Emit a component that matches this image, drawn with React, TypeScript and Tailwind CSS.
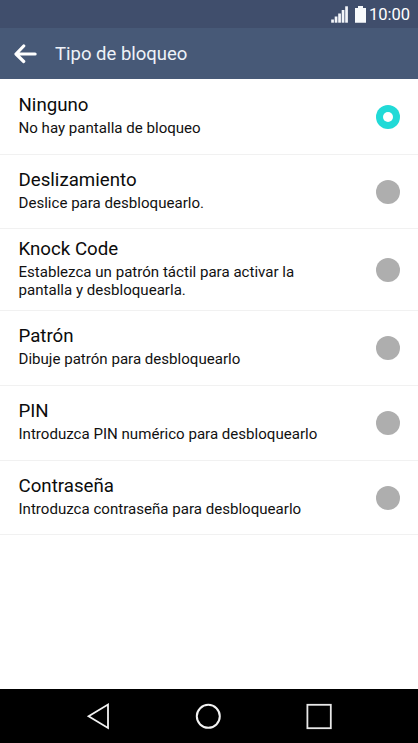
import React, { useState } from 'react';

interface LockOption {
    id: string;
    title: string;
    description: string;
    rowClass: string;
}

const OPTIONS: LockOption[] = [
    { id: 'none', title: 'Ninguno', description: 'No hay pantalla de bloqueo', rowClass: 'h-[76px]' },
    { id: 'swipe', title: 'Deslizamiento', description: 'Deslice para desbloquearlo.', rowClass: 'h-[74px]' },
    { id: 'knock', title: 'Knock Code', description: 'Establezca un patrón táctil para activar la pantalla y desbloquearla.', rowClass: 'h-[82px]' },
    { id: 'pattern', title: 'Patrón', description: 'Dibuje patrón para desbloquearlo', rowClass: 'h-[75px]' },
    { id: 'pin', title: 'PIN', description: 'Introduzca PIN numérico para desbloquearlo', rowClass: 'h-[75px]' },
    { id: 'password', title: 'Contraseña', description: 'Introduzca contraseña para desbloquearlo', rowClass: 'h-[74px]' },
];

const StatusBar: React.FC = () => (
    <div className="flex h-7 shrink-0 items-center justify-end bg-[#404e6c] pr-[8px] text-white">
        <svg width="17" height="17" viewBox="0 0 17 17" className="mr-[7px]" fill="#f4f6fa">
            <rect x="0.2" y="13.5" width="2.7" height="3.2" />
            <rect x="3.7" y="10.5" width="2.7" height="6.2" />
            <rect x="7.2" y="7.5" width="2.7" height="9.2" />
            <rect x="10.7" y="4" width="2.7" height="12.7" />
            <rect x="14.2" y="0.3" width="2.7" height="16.4" />
        </svg>
        <svg width="11" height="17" viewBox="0 0 11 17" className="mr-[3px]" fill="#f8fafc">
            <path d="M3 0h5v2h3v14.7H0V2h3z" />
        </svg>
        <span className="text-[16.5px] leading-7 pt-px">10:00</span>
    </div>
);

const Header: React.FC = () => (
    <div className="flex h-[51px] shrink-0 items-center bg-[#475977] pl-[14px]">
        <svg width="24" height="20" viewBox="0 0 24 20" fill="none" stroke="#ffffff" strokeWidth="3.2" strokeLinecap="round" strokeLinejoin="round">
            <path d="M9.7 2L2 10l7.7 7.5M2.5 10h18.6" />
        </svg>
        <h1 className="ml-[17px] pt-[2px] text-[18.5px] text-[#eef2f8]">Tipo de bloqueo</h1>
    </div>
);

const Radio: React.FC<{ checked: boolean }> = ({ checked }) => (
    <span
        className={
            checked
                ? 'flex size-6 shrink-0 items-center justify-center rounded-full bg-[#21dad7]'
                : 'flex size-6 shrink-0 items-center justify-center rounded-full bg-[#aeaeae]'
        }
    >
        {checked && <span className="size-[10px] rounded-full bg-white" />}
    </span>
);

const NavBar: React.FC = () => (
    <div className="flex h-[54px] shrink-0 items-center justify-between bg-black pl-[85px] pr-[85px]">
        <svg width="26" height="28" viewBox="0 0 26 28" fill="none" stroke="#f2f2f2" strokeWidth="1.8">
            <path d="M23 2.5v23.4L3.6 14.2z" />
        </svg>
        <svg width="28" height="28" viewBox="0 0 28 28" fill="none" stroke="#f2f2f2" strokeWidth="2">
            <circle cx="14.3" cy="14.3" r="11.5" />
        </svg>
        <svg width="28" height="28" viewBox="0 0 28 28" fill="none" stroke="#e8e8e8" strokeWidth="1.8">
            <rect x="2.4" y="2.8" width="23.4" height="23.4" />
        </svg>
    </div>
);

const App: React.FC = () => {
    const [selected, setSelected] = useState('none');

    return (
        <div className="flex h-[743px] w-[418px] flex-col overflow-hidden bg-white font-[Roboto,sans-serif]">
            <StatusBar />
            <Header />

            {/* Lock types */}
            <div className="flex-1" role="radiogroup">
                {OPTIONS.map(option => (
                    <button
                        key={option.id}
                        role="radio"
                        aria-checked={selected === option.id}
                        onClick={() => setSelected(option.id)}
                        className={`flex w-full items-center justify-between border-b border-[#f1f1f1] pl-[18.5px] pr-[18px] text-left ${option.rowClass}`}
                    >
                        <div className="w-[305px] pb-[2px]">
                            <p className="text-[18.7px] leading-[24px] text-[#0c0c0c]">{option.title}</p>
                            <p className="text-[15.08px] leading-[17.5px] text-[#111111] pt-[3px] pb-px">{option.description}</p>
                        </div>
                        <Radio checked={selected === option.id} />
                    </button>
                ))}
            </div>

            <NavBar />
        </div>
    );
};

export default App;
